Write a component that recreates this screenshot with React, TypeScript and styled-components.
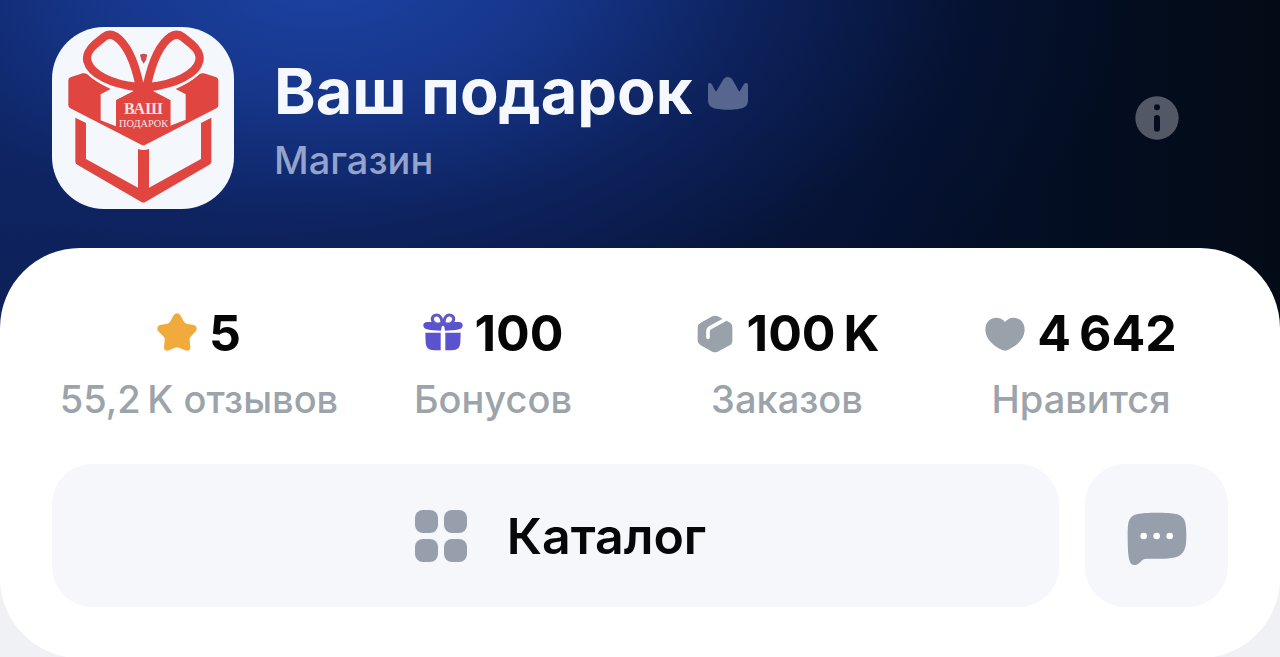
import React from 'react';
import styled, { createGlobalStyle } from 'styled-components';

const GlobalStyle = createGlobalStyle`
  * { box-sizing: border-box; }
  body {
    margin: 0;
    background: #f0f1f5;
    font-family: Inter, "Noto Sans", sans-serif;
  }
`;

const Page = styled.main`
  background:
    radial-gradient(ellipse 64% 460px at 25% -30px, #1c43a4 0%, #16368a 28%, rgba(14, 36, 98, 0.8) 55%, rgba(8, 22, 62, 0.4) 80%, rgba(4, 12, 28, 0) 100%) 0 0 / 100% 340px no-repeat,
    linear-gradient(90deg, #10286a 0%, #0a1a48 40%, #04102c 70%, #030b16 100%) 0 0 / 100% 340px no-repeat;
`;

const Header = styled.header`
  display: flex;
  align-items: center;
  padding: 27px 52px 39px;
`;

const Avatar = styled.svg`
  flex: none;
  width: 182px;
  height: 182px;
  border-radius: 52px;
  background: #f4f7fc;
`;

const Titles = styled.div`
  display: flex;
  flex: 1;
  flex-direction: column;
  gap: 11px;
  min-width: 0;
  margin-left: 40px;
`;

const TitleRow = styled.div`
  display: flex;
  align-items: center;
  gap: 16px;
`;

const ShopName = styled.h1`
  margin: 0;
  color: #f5f8ff;
  font-size: 63px;
  font-weight: 700;
  line-height: 72px;
  white-space: nowrap;
`;

const ShopKind = styled.p`
  margin: 0;
  color: #94a3cc;
  font-size: 38px;
  font-weight: 500;
  line-height: 44px;
`;

const Icon = styled.svg<{ $size: number }>`
  flex: none;
  display: block;
  width: ${(p) => p.$size}px;
  height: ${(p) => p.$size}px;
`;

const InfoButton = styled.button`
  display: flex;
  align-items: center;
  justify-content: center;
  width: 143px;
  height: 72px;
  padding: 0;
  border: 0;
  background: none;
  cursor: pointer;
`;

const Card = styled.section`
  padding: 55px 52px 51px;
  border-radius: 80px;
  background: #fff;
`;

const CardBack = styled.div`
  background: linear-gradient(transparent 50%, #f0f1f5 50%);
`;

const Stats = styled.ul`
  display: grid;
  grid-template-columns: repeat(4, 1fr);
  margin: 0 0 41px;
  padding: 0;
  list-style: none;
`;

const Stat = styled.li`
  display: flex;
  flex-direction: column;
  align-items: center;
  gap: 12px;
  white-space: nowrap;
`;

const StatValue = styled.div`
  display: flex;
  align-items: center;
  gap: 12px;
  color: #060606;
  font-size: 50px;
  font-weight: 700;
  line-height: 60px;
`;

const StatLabel = styled.div`
  color: #9ba3ab;
  font-size: 38px;
  font-weight: 500;
  line-height: 48px;
`;

const Actions = styled.div`
  display: flex;
  gap: 26px;
`;

const ActionButton = styled.button<{ $wide?: boolean }>`
  display: flex;
  flex: ${(p) => (p.$wide ? '1' : '0 0 143px')};
  align-items: center;
  justify-content: center;
  gap: 30px;
  height: 143px;
  padding: 0;
  border: 0;
  border-radius: 40px;
  background: #f5f7fb;
  color: #060709;
  font-family: inherit;
  font-size: 50px;
  font-weight: 600;
  line-height: 60px;
  cursor: pointer;
`;

const Logo = () => (
  <Avatar viewBox="36 36 546 546" role="img" aria-label="Ваш подарок">
    <g fill="#e0453f">
      <path d="M85 196Q85 190 91 187L128 175Q136 173 142 178Q170 203 212 222L182 238V316L228 334V256L282 228L310 214L338 228L391 256V332L437 314V238L407 222Q450 203 478 178Q484 173 492 175L529 187Q535 190 535 196V270Q535 277 529 280L316 389Q310 392 304 389L91 280Q85 277 85 270Z" />
      <path d="M106 308L138 324V432L294 518V402Q310 408 327 402V518L483 432V324L514 308V440Q514 446 508 449L316 561Q310 564 304 561L112 449Q106 446 106 440Z" />
    </g>
    <g fill="#f4f7fc" stroke="#f4f7fc" strokeLinejoin="round" strokeWidth="40">
      <path d="M298 205C282 140 262 88 226 63C212 55 202 58 192 66L166 87C148 102 138 122 142 138C152 178 215 205 280 213" fill="none" />
      <path d="M322 205C338 140 358 88 394 63C408 55 418 58 428 66L454 87C472 102 482 122 478 138C468 178 405 205 340 213" fill="none" />
    </g>
    <path d="M300 119Q311 114 322 119Q320 136 311 146Q302 136 300 119Z" fill="#c9504f" />
    <g fill="none" stroke="#e0453f" strokeWidth="25" strokeLinejoin="round">
      <path d="M299 212C284 140 262 88 226 64C212 56 202 58 192 66L166 87C148 102 138 122 142 138C152 178 215 207 290 216" />
      <path d="M321 212C336 140 358 88 394 64C408 56 418 58 428 66L454 87C472 102 482 122 478 138C468 178 405 207 330 216" />
    </g>
    <path d="M228 256L282 228L272 218L292 196L310 202L328 196L348 218L338 228L391 256V330H228Z" fill="#e0453f" />
    <g fill="#f8e3e6" fontFamily='"Liberation Serif", serif' textAnchor="middle">
      <text x="310" y="298" fontSize="48" fontWeight="700">ВАШ</text>
      <text x="311" y="336" fontSize="31">ПОДАРОК</text>
    </g>
  </Avatar>
);

const Crown = () => (
  <Icon $size={40} viewBox="627 62 120 120" fill="#56668f" aria-hidden="true">
    <path d="M627 104C627 97 634 97 638 101L649 121Q651 124 653 121L672 89C679 77 694 77 701 89L719 121Q721 124 723 121L735 101C739 97 747 97 747 104V149C747 170 734 178 687 178C640 178 627 170 627 149Z" />
  </Icon>
);

const Info = () => (
  <Icon $size={44} viewBox="105 81 132 132" aria-hidden="true">
    <circle cx="171" cy="147" r="65" fill="#535867" />
    <circle cx="171" cy="115" r="9" fill="#050d20" />
    <rect x="162" y="138" width="18" height="50" rx="9" fill="#050d20" />
  </Icon>
);

const Star = () => (
  <Icon $size={40} viewBox="318 39 120 120" fill="#f0ab3c" aria-hidden="true">
    <path d="M368 46C373 38 383 38 388 46L398 64Q401 69 407 71L428 75C437 77 440 87 434 94L419 110Q415 114 416 120L418 141C419 150 411 155 402 151L384 143Q378 141 372 143L354 151C346 155 338 150 339 141L341 120Q342 114 338 110L322 94C316 87 319 77 328 75L349 71Q355 69 358 64Z" />
  </Icon>
);

const Gift = () => (
  <Icon $size={40} viewBox="66 39 120 120" aria-hidden="true">
    <g fill="#5b52d0">
      <path d="M73 98H119V151H100C81 151 75 143 74 127Z" />
      <path d="M133 98H179L178 127C177 143 171 151 152 151H133Z" />
      <path d="M79 66H173C189 66 189 84 174 88C162 91 148 92 132 92L130 80Q126 74 122 80L120 92C104 92 90 91 78 88C63 84 63 66 79 66Z" />
    </g>
    <g fill="#fff" stroke="#6158c6" strokeWidth="9">
      <path d="M122 70C125 54 114 42 102 46C89 51 93 68 105 71C111 72 118 72 122 70Z" />
      <path d="M130 70C127 54 138 42 150 46C163 51 159 68 147 71C141 72 134 72 130 70Z" />
    </g>
  </Icon>
);

const Box = () => (
  <Icon $size={40} viewBox="45 39 120 120" aria-hidden="true">
    <path d="M97 49Q105 46 113 49L148 67Q157 72 157 82V123Q157 132 149 136L113 155Q105 159 97 155L62 136Q53 131 53 122V82Q53 73 62 68Z" fill="#99a1ab" />
    <path d="M84 113V95Q84 87 91 83L136 58" fill="none" stroke="#fff" strokeWidth="11" />
    <circle cx="84" cy="113" r="5" fill="#fff" />
  </Icon>
);

const Heart = () => (
  <Icon $size={40} viewBox="51 39 120 120" fill="#99a1ab" aria-hidden="true">
    <path d="M111 66C101 53 84 50 70 57C54 65 49 84 54 102C60 123 80 140 101 149Q111 154 121 149C142 140 162 123 168 102C173 84 168 65 152 57C138 50 121 53 111 66Z" />
  </Icon>
);

const Grid = () => (
  <Icon $size={72} viewBox="0 0 72 72" fill="#979eac" aria-hidden="true">
    <rect x="10" y="10" width="23" height="23" rx="8" />
    <rect x="39" y="10" width="23" height="23" rx="8" />
    <rect x="10" y="39" width="23" height="23" rx="8" />
    <rect x="39" y="39" width="23" height="23" rx="8" />
  </Icon>
);

const Chat = () => (
  <Icon $size={72} viewBox="182 149 216 216" aria-hidden="true">
    <path d="M202 257C202 231 203 214 209 205C218 191 237 187 290 187C343 187 361 191 370 205C376 214 378 231 378 257C378 283 375 298 367 307C356 321 338 325 296 325H258Q249 325 244 331C235 342 222 348 214 342C205 334 202 311 202 257Z" fill="#979eac" />
    <g fill="#fff">
      <circle cx="250" cy="257" r="10" />
      <circle cx="289" cy="257" r="10" />
      <circle cx="328" cy="257" r="10" />
    </g>
  </Icon>
);

const stats = [
  { icon: <Star />, value: '5', label: '55,2\u2009K отзывов' },
  { icon: <Gift />, value: '100', label: 'Бонусов' },
  { icon: <Box />, value: '100\u2009K', label: 'Заказов' },
  { icon: <Heart />, value: '4\u2009642', label: 'Нравится' },
];

export default function App() {
  return (
    <>
      <GlobalStyle />
      <Page>
        <Header>
          <Logo />
          <Titles>
            <TitleRow>
              <ShopName>Ваш подарок</ShopName>
              <Crown />
            </TitleRow>
            <ShopKind>Магазин</ShopKind>
          </Titles>
          <InfoButton aria-label="Информация о магазине">
            <Info />
          </InfoButton>
        </Header>
        <CardBack>
          <Card>
            <Stats>
              {stats.map((s) => (
                <Stat key={s.label}>
                  <StatValue>
                    {s.icon}
                    <span>{s.value}</span>
                  </StatValue>
                  <StatLabel>{s.label}</StatLabel>
                </Stat>
              ))}
            </Stats>
            <Actions>
              <ActionButton $wide>
                <Grid />
                <span>Каталог</span>
              </ActionButton>
              <ActionButton aria-label="Написать в чат">
                <Chat />
              </ActionButton>
            </Actions>
          </Card>
        </CardBack>
      </Page>
    </>
  );
}
